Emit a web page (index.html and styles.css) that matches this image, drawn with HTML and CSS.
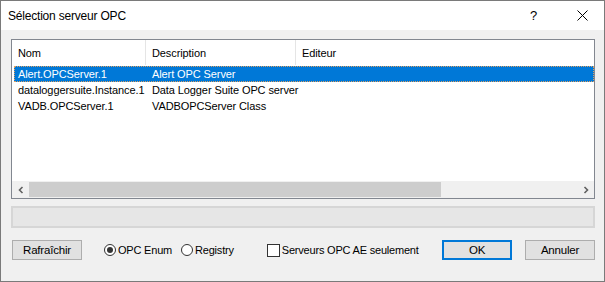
FILE: index.html
```html
<!DOCTYPE html>
<html lang="fr">
<head>
    <meta charset="UTF-8">
    <title>Sélection serveur OPC</title>
    <link rel="stylesheet" href="styles.css">
</head>
<body>
    <div class="window">
        <div class="titlebar">
            <span class="title">Sélection serveur OPC</span>
            <span class="help">?</span>
            <span class="close">
                <svg width="11" height="11" viewBox="0 0 11 11"><path d="M0.5 0.5 L10.5 10.5 M10.5 0.5 L0.5 10.5" stroke="#000" stroke-width="1" fill="none"/></svg>
            </span>
        </div>
        <div class="content">
            <div class="listview">
                <div class="lv-header">
                    <div class="col col-nom">Nom</div>
                    <div class="col col-desc">Description</div>
                    <div class="col col-edit">Editeur</div>
                </div>
                <div class="lv-body">
                    <div class="row selected">
                        <div class="col col-nom">Alert.OPCServer.1</div>
                        <div class="col col-desc">Alert OPC Server</div>
                        <div class="col col-edit"></div>
                    </div>
                    <div class="row">
                        <div class="col col-nom">dataloggersuite.Instance.1</div>
                        <div class="col col-desc">Data Logger Suite OPC server</div>
                        <div class="col col-edit"></div>
                    </div>
                    <div class="row">
                        <div class="col col-nom">VADB.OPCServer.1</div>
                        <div class="col col-desc">VADBOPCServer Class</div>
                        <div class="col col-edit"></div>
                    </div>
                </div>
                <div class="hscroll">
                    <div class="sb-arrow">
                        <svg width="8" height="8" viewBox="0 0 8 8"><path d="M5.5 1 L2.5 4 L5.5 7" stroke="#606060" stroke-width="1.6" fill="none"/></svg>
                    </div>
                    <div class="sb-track">
                        <div class="sb-thumb"></div>
                    </div>
                    <div class="sb-arrow">
                        <svg width="8" height="8" viewBox="0 0 8 8"><path d="M2.5 1 L5.5 4 L2.5 7" stroke="#606060" stroke-width="1.6" fill="none"/></svg>
                    </div>
                </div>
            </div>

            <div class="status"></div>

            <div class="actions">
                <button class="btn">Rafraîchir</button>
                <label class="radio checked"><span class="dot"></span>OPC Enum</label>
                <label class="radio"><span class="dot"></span>Registry</label>
                <label class="check"><span class="box"></span>Serveurs OPC AE seulement</label>
                <button class="btn btn-default">OK</button>
                <button class="btn">Annuler</button>
            </div>
        </div>
    </div>
</body>
</html>
```

FILE: styles.css
```css
body {
    margin: 0;
    font-family: "Liberation Sans", Arial, sans-serif;
    font-size: 11px;
    letter-spacing: -0.1px;
    color: #000;
    background-color: #fff;
}
.window {
    width: 605px;
    height: 282px;
    box-sizing: border-box;
    border: 1px solid #7a7a7a;
    background-color: #f0f0f0;
    display: flex;
    flex-direction: column;
}
.titlebar {
    height: 29px;
    background-color: #fff;
    display: flex;
    align-items: center;
    padding-left: 7px;
    font-size: 12px;
    letter-spacing: -0.2px;
}
.title {
    flex: 1;
}
.help {
    width: 14px;
    font-size: 13px;
    margin-right: 33px;
}
.close {
    display: flex;
    margin-right: 16px;
}
.content {
    padding: 9px 9px 0 10px;
}
.listview {
    height: 158px;
    border: 1px solid #828790;
    background-color: #fff;
    display: flex;
    flex-direction: column;
}
.lv-header {
    height: 25px;
    display: flex;
    align-items: stretch;
}
.lv-header .col {
    display: flex;
    align-items: center;
    border-right: 1px solid #e5e5e5;
    overflow: hidden;
}
.col {
    box-sizing: border-box;
    padding-left: 6px;
    white-space: nowrap;
}
.col-nom {
    width: 134px;
}
.col-desc {
    width: 150px;
}
.col-edit {
    flex: 1;
}
.lv-header .col-edit {
    border-right: none;
}
.lv-body {
    flex: 1;
    padding-top: 1px;
}
.row {
    height: 16px;
    line-height: 16px;
    display: flex;
    margin-left: 2px;
}
.row .col-nom {
    width: 132px;
    padding-left: 4px;
}
.row.selected {
    background-color: #0078d7;
    color: #fff;
    outline: 1px dotted #e0a060;
    outline-offset: -1px;
}
.hscroll {
    height: 17px;
    display: flex;
    background-color: #f0f0f0;
}
.sb-arrow {
    width: 17px;
    display: flex;
    align-items: center;
    justify-content: center;
}
.sb-track {
    flex: 1;
    display: flex;
}
.sb-thumb {
    width: 412px;
    margin: 1px 0;
    background-color: #cdcdcd;
}
.status {
    margin-top: 7px;
    height: 22px;
    box-sizing: border-box;
    border: 2px solid #d6d6d6;
    background-color: #e6e6e6;
}
.actions {
    margin-top: 12px;
    display: flex;
    align-items: center;
    height: 20px;
}
.btn {
    flex-shrink: 0;
    font-family: inherit;
    font-size: 11.5px;
    letter-spacing: -0.2px;
    height: 20px;
    width: 70px;
    box-sizing: border-box;
    border: 1px solid #adadad;
    background-color: #e1e1e1;
    padding: 0;
    color: #000;
}
.btn:first-child {
    margin-left: 1px;
}
.btn-default {
    border: 2px solid #0078d7;
    margin-right: 13px;
}
.radio, .check {
    display: flex;
    align-items: center;
    gap: 2px;
    white-space: nowrap;
    letter-spacing: -0.2px;
}
.radio {
    margin-left: 22px;
}
.radio + .radio {
    margin-left: 9px;
}
.dot {
    width: 12px;
    height: 12px;
    box-sizing: border-box;
    border: 1px solid #333;
    border-radius: 50%;
    background-color: #fff;
    display: flex;
    align-items: center;
    justify-content: center;
}
.radio.checked .dot::after {
    content: "";
    width: 6px;
    height: 6px;
    border-radius: 50%;
    background-color: #333;
}
.check {
    margin-left: 33px;
    flex: 1;
}
.box {
    width: 13px;
    height: 13px;
    box-sizing: border-box;
    border: 1px solid #333;
    background-color: #fff;
}
```
